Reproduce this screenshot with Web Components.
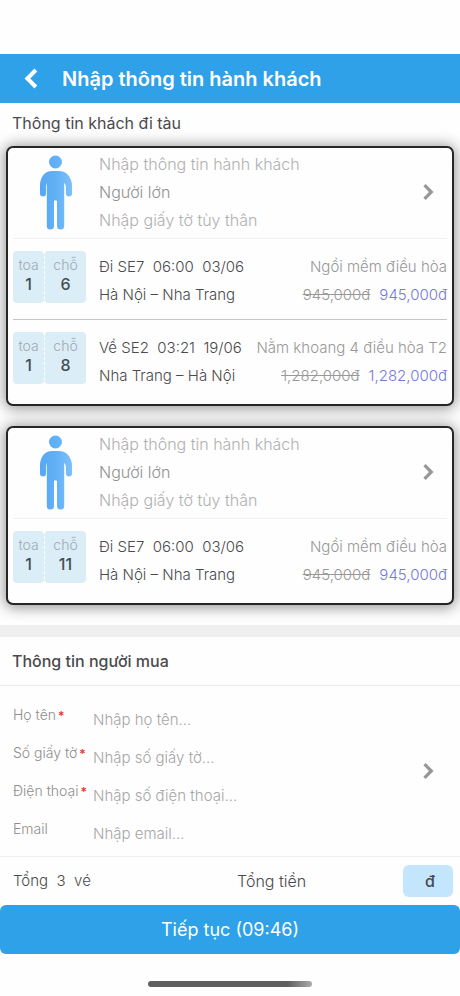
<!DOCTYPE html>
<html lang="vi">
<head>
<meta charset="utf-8">
<meta name="viewport" content="width=device-width, initial-scale=1">
<title>Nhập thông tin hành khách</title>
<style>
  body { margin: 0; background: #fefefe; color: #4a4a4c; font: 300 16px/28px Inter, "Noto Sans", sans-serif; }
</style>
</head>
<body>
<booking-page></booking-page>

<script>
const define = (name, html, setup) => {
  const template = document.createElement('template');
  template.innerHTML = html;
  customElements.define(name, class extends HTMLElement {
    constructor() {
      super();
      this.attachShadow({ mode: 'open' }).append(template.content.cloneNode(true));
    }
    connectedCallback() {
      if (setup) setup(this, this.shadowRoot);
    }
  });
};

define('chevron-icon', `
  <style>
    :host { display: block; width: 12px; height: 18px; color: #979797; }
    :host([direction="left"]) { width: 15px; height: 23px; color: #fff; }
    :host([direction="left"]) svg { transform: scaleX(-1); }
    svg { display: block; width: 100%; height: 100%; }
  </style>
  <svg viewBox="0 0 12 18" aria-hidden="true"><path d="M2.500 2.200 9.300 9l-6.800 6.800" fill="none" stroke="currentColor" stroke-width="3.200"/></svg>
`);

define('person-icon', `
  <style>
    :host { display: block; width: 34px; height: 75px; }
    svg { display: block; width: 100%; height: 100%; }
  </style>
  <svg viewBox="0 0 34 75" aria-hidden="true">
    <defs>
      <linearGradient id="g" gradientUnits="userSpaceOnUse" x1="1" y1="0" x2="33" y2="0">
        <stop offset="0" stop-color="#57a8f3"/><stop offset=".5" stop-color="#62b0f6"/><stop offset="1" stop-color="#7cc1fb"/>
      </linearGradient>
    </defs>
    <g fill="url(#g)">
      <circle cx="16.500" cy="7" r="6.500"/>
      <path d="M13 16h7C27 16 33 22 33 30.500v8a3 3 0 0 1-6 0V32q-.3-3-1.800-4v43a3 3 0 0 1-7.200 0V46q-1.500-1.500-3 0v25a3 3 0 0 1-7.200 0V28Q7.200 29 7 32v6.500a3 3 0 0 1-6 0v-8C1 22 6 16 13 16z"/>
    </g>
  </svg>
`);

define('app-bar', `
  <style>
    :host { display: flex; align-items: center; gap: 20px; height: 49px; padding: 0 20px; background: #2ea1e8; color: #fff; }
    button { display: grid; place-items: center; width: 22px; height: 40px; padding: 0; border: 0; background: none; }
    h1 { margin: 0; font-size: 20px; font-weight: 600; line-height: 28px; }
  </style>
  <button type="button" aria-label="Quay lại"><chevron-icon direction="left"></chevron-icon></button>
  <h1><slot></slot></h1>
`);

define('seat-ticket', `
  <style>
    :host { display: grid; grid-template-columns: 31px 42px; flex: none; height: 52px; }
    div { display: flex; flex-direction: column; text-align: center; padding-top: 4px; background: #dbedf7; border-radius: 4px; }
    div + div { border-left: 1px dashed #fff; }
    span { font-size: 14px; line-height: 20px; color: #a0a8ae; }
    b { font-size: 16px; font-weight: 500; line-height: 18px; color: #464c54; }
  </style>
  <div><span>toa</span><b id="car"></b></div>
  <div><span>chỗ</span><b id="seat"></b></div>
`, (host, root) => {
  root.getElementById('car').textContent = host.getAttribute('car');
  root.getElementById('seat').textContent = host.getAttribute('seat');
});

define('trip-row', `
  <style>
    :host { display: flex; gap: 13px; padding: 12px 0 10px; font-size: 15px; }
    :host(:not(:first-child)) { border-top: 1px solid #c6c6c6; }
    .info { flex: 1; padding-top: 2px; }
    .line { display: flex; justify-content: space-between; white-space: pre; }
    .class, s { color: #989898; }
    .prices { display: flex; gap: 9px; }
    .price { color: #7279e2; }
  </style>
  <slot></slot>
  <div class="info">
    <div class="line"><span id="train"></span><span class="class" id="class"></span></div>
    <div class="line"><span id="route"></span><span class="prices"><s id="old"></s><span class="price" id="new"></span></span></div>
  </div>
`, (host, root) => {
  const get = name => host.getAttribute(name);
  root.getElementById('train').textContent = get('train');
  root.getElementById('class').textContent = get('comfort');
  root.getElementById('route').textContent = get('route');
  root.getElementById('old').textContent = get('price');
  root.getElementById('new').textContent = get('price');
});

define('passenger-card', `
  <style>
    :host { display: block; margin: 0 6px; padding: 0 5px 4px; border: 2px solid #262626; border-radius: 7px; background: #fefefe; box-shadow: 0 1px 14px 2px rgba(0,0,0,.4); }
    button { display: flex; align-items: center; width: 100%; height: 91px; padding: 0 13px 2px 26px; border: 0; border-bottom: 1px solid #f1f1f1; background: none; font: inherit; color: #b0b0b0; text-align: left; }
    .lines { flex: 1; display: flex; flex-direction: column; padding-left: 26px; }
    .type { color: #929292; }
  </style>
  <button type="button">
    <person-icon></person-icon>
    <span class="lines"><span>Nhập thông tin hành khách</span><span class="type">Người lớn</span><span>Nhập giấy tờ tùy thân</span></span>
    <chevron-icon></chevron-icon>
  </button>
  <slot></slot>
`);

define('buyer-field', `
  <style>
    :host { display: flex; height: 38px; }
    label { width: 80px; flex: none; font-size: 14px; line-height: 28px; color: #8d8d8d; white-space: nowrap; }
    i { margin-left: 2px; font-size: 12px; font-style: normal; font-weight: 600; color: #f03434; }
    input { flex: 1; min-width: 0; box-sizing: border-box; height: 36px; padding: 0; border: 0; outline: 0; background: none; font: inherit; font-size: 15px; color: #4a4a4c; }
    input::placeholder { color: #a6a6a6; opacity: 1; }
  </style>
  <label for="value"><span></span></label>
  <input id="value">
`, (host, root) => {
  root.querySelector('span').textContent = host.getAttribute('label');
  root.querySelector('input').placeholder = host.getAttribute('hint');
  if (host.hasAttribute('required')) {
    const star = document.createElement('i');
    star.textContent = '*';
    root.querySelector('label').append(star);
    root.querySelector('input').required = true;
  }
});

define('buyer-form', `
  <style>
    :host { display: block; border-top: 12px solid #efefef; }
    h2 { margin: 0; padding: 10px 12px; font-size: 16px; font-weight: 500; line-height: 28px; border-bottom: 1px solid #ececec; }
    form { display: flex; align-items: center; padding: 0 26px 0 13px; border-bottom: 1px solid #f0f0f0; }
    .fields { flex: 1; padding: 15px 0 3px; }
    button { padding: 0; border: 0; background: none; }
  </style>
  <h2>Thông tin người mua</h2>
  <form>
    <div class="fields"><slot></slot></div>
    <button type="button" aria-label="Chọn người mua"><chevron-icon></chevron-icon></button>
  </form>
`);

define('total-bar', `
  <style>
    :host { display: grid; grid-template-columns: 1fr 1fr; gap: 8px; align-items: center; height: 48px; padding: 0 7px 0 13px; }
    .count { font-size: 15px; white-space: pre; }
    .sum { display: flex; justify-content: space-between; align-items: center; }
    output { box-sizing: border-box; width: 50px; padding: 2px 0 2px 4px; border-radius: 6px; background: #c3e6fd; font-weight: 500; text-align: center; }
  </style>
  <span class="count">Tổng  3  vé</span>
  <div class="sum"><label for="total">Tổng tiền</label><output id="total">đ</output></div>
`);

define('booking-page', `
  <style>
    :host { display: flex; flex-direction: column; min-height: 100vh; padding-top: 54px; box-sizing: border-box; }
    h2 { margin: 0; padding: 6px 12px 9px; font-size: 16px; font-weight: 400; line-height: 28px; }
    .cards { display: flex; flex-direction: column; gap: 20px; padding-bottom: 20px; overflow: hidden; padding-top: 20px; margin-top: -20px; }
    .next { height: 49px; border: 0; border-radius: 6px; background: #2ea1e8; color: #fff; font: 400 18px/28px Inter, "Noto Sans", sans-serif; }
    .home { width: 164px; height: 6px; margin: 27px auto 0; border-radius: 3px; background: linear-gradient(90deg, #5f5f5f 85%, #aaa); }
  </style>
  <app-bar>Nhập thông tin hành khách</app-bar>
  <h2>Thông tin khách đi tàu</h2>
  <div class="cards">
    <passenger-card>
      <trip-row train="Đi SE7  06:00  03/06" comfort="Ngồi mềm điều hòa" route="Hà Nội – Nha Trang" price="945,000đ"><seat-ticket car="1" seat="6"></seat-ticket></trip-row>
      <trip-row train="Về SE2  03:21  19/06" comfort="Nằm khoang 4 điều hòa T2" route="Nha Trang – Hà Nội" price="1,282,000đ"><seat-ticket car="1" seat="8"></seat-ticket></trip-row>
    </passenger-card>
    <passenger-card>
      <trip-row train="Đi SE7  06:00  03/06" comfort="Ngồi mềm điều hòa" route="Hà Nội – Nha Trang" price="945,000đ"><seat-ticket car="1" seat="11"></seat-ticket></trip-row>
    </passenger-card>
  </div>
  <buyer-form>
    <buyer-field label="Họ tên" hint="Nhập họ tên..." required></buyer-field>
    <buyer-field label="Số giấy tờ" hint="Nhập số giấy tờ..." required></buyer-field>
    <buyer-field label="Điện thoại" hint="Nhập số điện thoại..." required></buyer-field>
    <buyer-field label="Email" hint="Nhập email..."></buyer-field>
  </buyer-form>
  <total-bar></total-bar>
  <button class="next" type="button">Tiếp tục (09:46)</button>
  <div class="home"></div>
`);
</script>
</body>
</html>
